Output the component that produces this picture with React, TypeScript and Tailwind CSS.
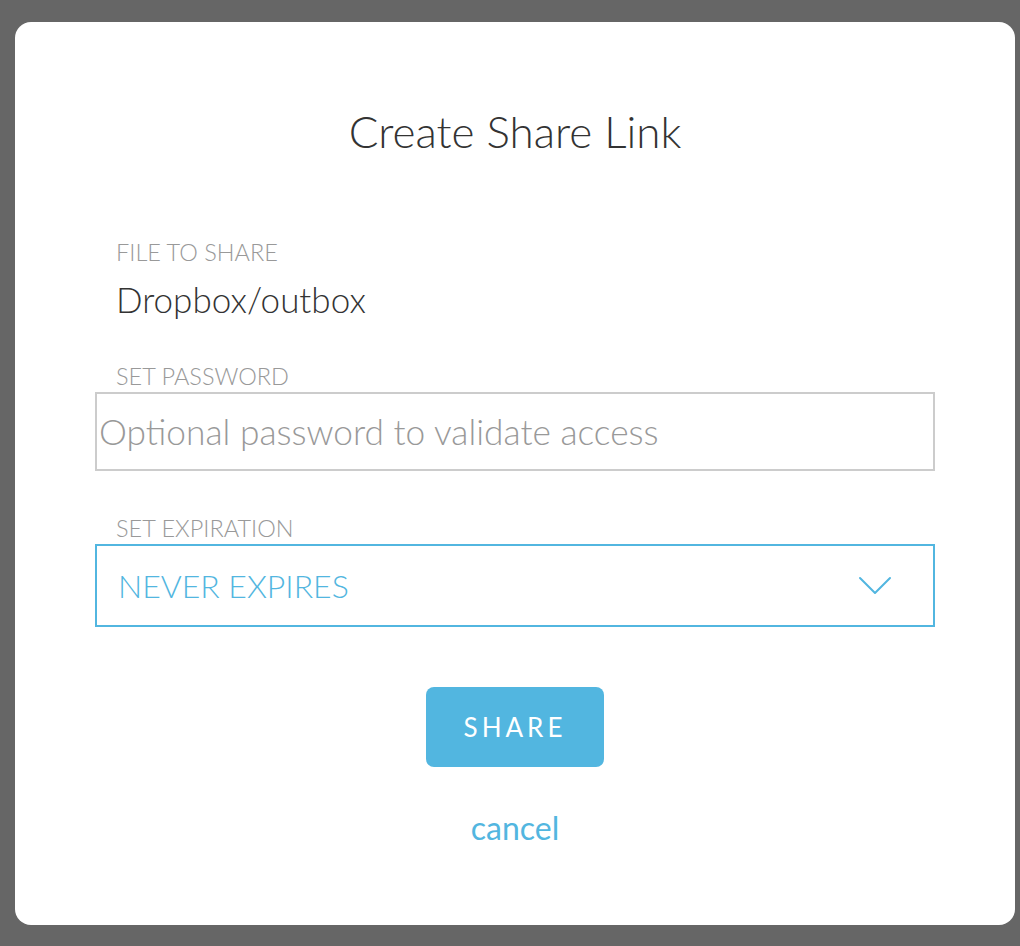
export default function App() {
  return (
    <div className="w-[1020px] h-[946px] bg-[#666666] pt-[22px] pl-[15px] font-['Lato',sans-serif]">
      <div className="w-[1000px] h-[903px] bg-white rounded-[16px] px-[80px] pt-[84px]">
        <h2 className="text-center text-[44px] leading-[50px] font-light text-[#333]">Create Share Link</h2>

        <div className="mt-[82px] pl-[21px]">
          <label className="block text-[23.5px] leading-[28px] font-light text-[#999] uppercase">File to share</label>
          <p className="mt-[13px] text-[35px] leading-[40px] font-light text-[#333]">Dropbox/outbox</p>
        </div>

        <label className="block mt-[43px] pl-[21px] text-[23.5px] leading-[28px] font-light text-[#999] uppercase">Set password</label>
        <input
          type="password"
          placeholder="Optional password to validate access"
          className="mt-[2px] w-full h-[79px] border-2 border-[#cccccc] px-[2px] text-[35.3px] font-light text-[#333] placeholder-[#999] outline-none"
        />

        <label className="block mt-[43px] pl-[21px] text-[23.5px] leading-[28px] font-light text-[#999] uppercase">Set expiration</label>
        <button className="mt-[2px] w-full h-[83px] border-2 border-[#52b6e0] flex items-center justify-between pl-[21px] pr-[41px]">
          <span className="text-[32px] font-light text-[#52b6e0] uppercase">Never expires</span>
          <svg width="34" height="20" viewBox="0 0 34 20" fill="none" stroke="#52b6e0" strokeWidth="2" strokeLinecap="round" strokeLinejoin="round">
            <polyline points="2,2 17,17 32,2" />
          </svg>
        </button>

        <div className="flex flex-col items-center">
          <button className="mt-[60px] w-[178px] h-[80px] rounded-[8px] bg-[#52b6e0] text-white text-[26px] tracking-[4px] uppercase">Share</button>
          <button className="mt-[41px] text-[32px] leading-[40px] text-[#52b6e0]">cancel</button>
        </div>
      </div>
    </div>
  );
}
